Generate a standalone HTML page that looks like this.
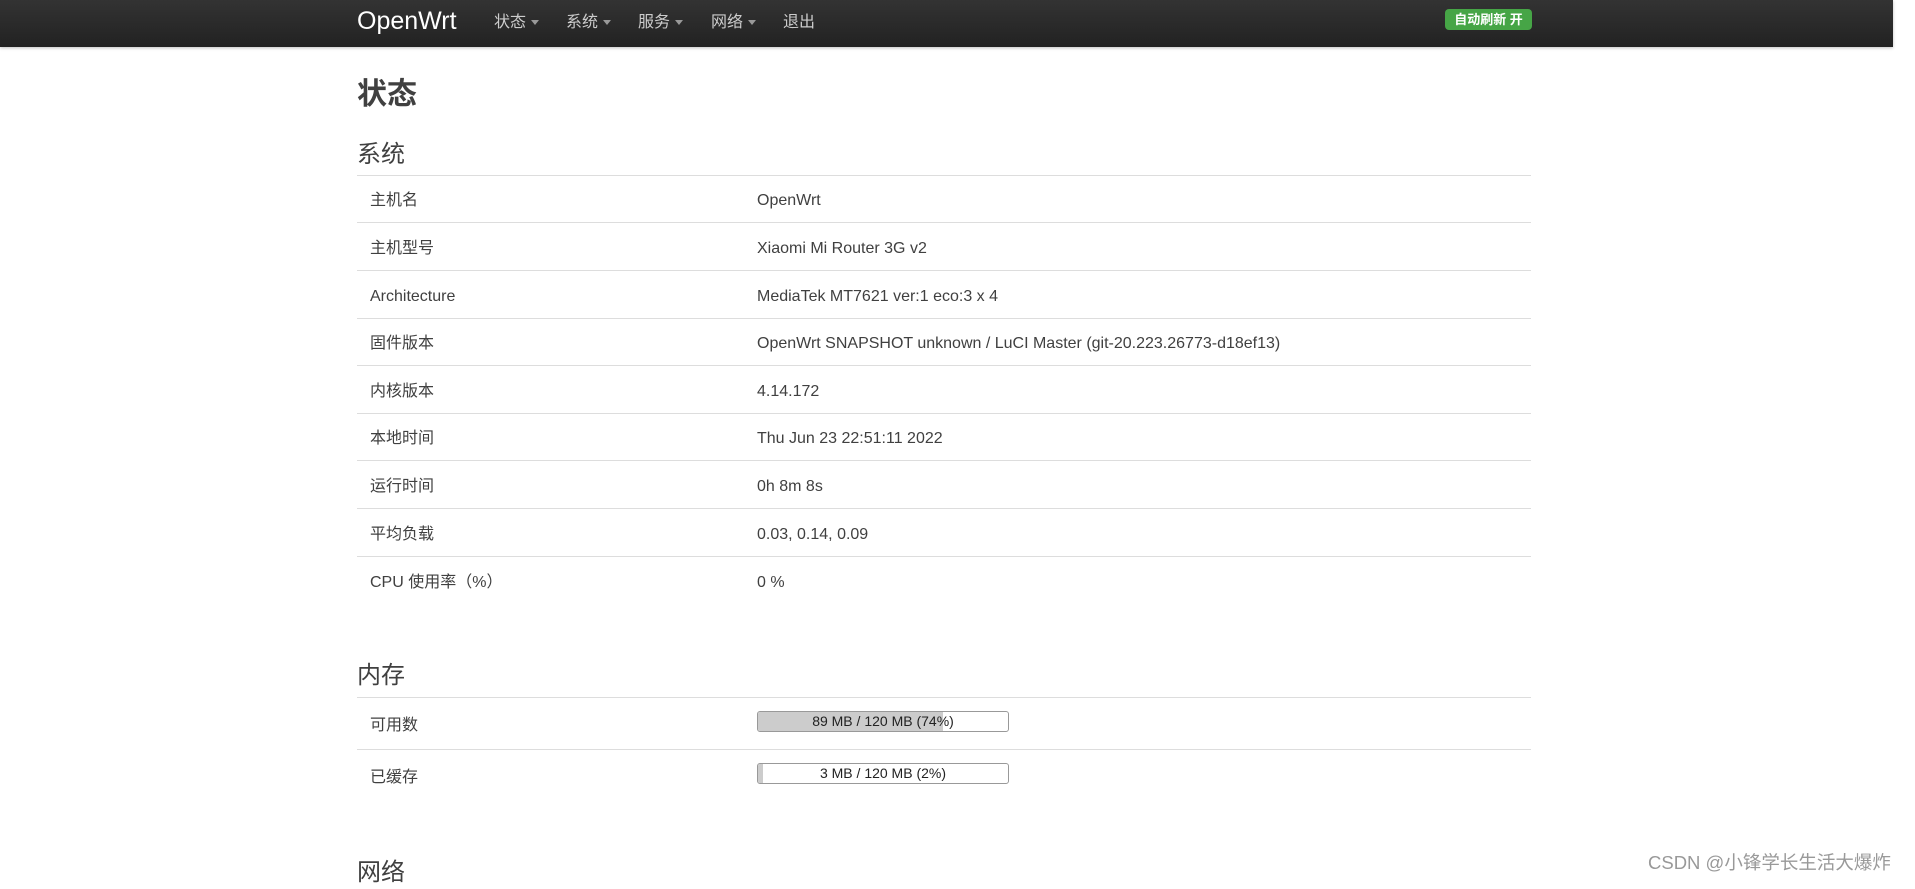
<!DOCTYPE html>
<html><head><meta charset="utf-8"><style>
*{box-sizing:border-box;margin:0;padding:0}
body{width:1915px;height:881px;overflow:hidden;background:#fff;font-family:"Liberation Sans","Noto Sans CJK SC",sans-serif;color:#404040;position:relative}
.nav{position:absolute;left:0;top:0;width:1893px;height:47px;background:linear-gradient(#333,#222);box-shadow:0 1px 3px rgba(0,0,0,.25)}
.brand{position:absolute;left:357px;top:6px;font-size:25px;line-height:30px;color:#fff}
.mi{position:absolute;top:12px;font-size:16px;line-height:22px;color:#ccc}
.caret{display:inline-block;width:0;height:0;border-left:4px solid transparent;border-right:4px solid transparent;border-top:5px solid #999;margin-left:5px;vertical-align:middle}
.badge{position:absolute;left:1445px;top:9px;width:87px;height:21px;background:#46a546;border-radius:4px;color:#fff;font-weight:bold;font-size:13px;line-height:21px;text-align:center}
h1{position:absolute;left:357px;top:75px;font-size:30px;line-height:40px;font-weight:bold;color:#404040}
h2{position:absolute;left:357px;font-size:24px;line-height:32px;font-weight:normal;color:#404040}
.row{position:absolute;left:357px;width:1174px;border-top:1px solid #ddd;font-size:16px}
.row span{position:absolute;top:50%;height:22px;line-height:22px;margin-top:-9px;overflow:visible}
.l{left:13px}.v{left:400px}
.bar{position:absolute;left:400px;width:252px;height:21px;border:1px solid #999;border-radius:3px;overflow:hidden;font-size:14px;text-align:center;line-height:19px;color:#222}
.bar i{position:absolute;left:0;top:0;bottom:0;background:#ccc}
.bar b{position:relative;font-weight:normal}
.wm{position:absolute;left:1648px;top:851px;font-size:18.5px;line-height:24px;color:#999}
</style></head><body>
<div class="nav">
<div class="brand">OpenWrt</div>
<div class="mi" style="left:494px">状态<span class="caret"></span></div>
<div class="mi" style="left:566px">系统<span class="caret"></span></div>
<div class="mi" style="left:638px">服务<span class="caret"></span></div>
<div class="mi" style="left:711px">网络<span class="caret"></span></div>
<div class="mi" style="left:783px">退出</div>
<div class="badge">自动刷新 开</div>
</div>
<h1>状态</h1>
<h2 style="top:139px">系统</h2>
<div class="row" style="top:175px;height:47px"><span class="l">主机名</span><span class="v">OpenWrt</span></div>
<div class="row" style="top:222px;height:48px"><span class="l">主机型号</span><span class="v">Xiaomi Mi Router 3G v2</span></div>
<div class="row" style="top:270px;height:48px"><span class="l">Architecture</span><span class="v">MediaTek MT7621 ver:1 eco:3 x 4</span></div>
<div class="row" style="top:318px;height:47px"><span class="l">固件版本</span><span class="v">OpenWrt SNAPSHOT unknown / LuCI Master (git-20.223.26773-d18ef13)</span></div>
<div class="row" style="top:365px;height:48px"><span class="l">内核版本</span><span class="v">4.14.172</span></div>
<div class="row" style="top:413px;height:47px"><span class="l">本地时间</span><span class="v">Thu Jun 23 22:51:11 2022</span></div>
<div class="row" style="top:460px;height:48px"><span class="l">运行时间</span><span class="v">0h 8m 8s</span></div>
<div class="row" style="top:508px;height:48px"><span class="l">平均负载</span><span class="v">0.03, 0.14, 0.09</span></div>
<div class="row" style="top:556px;height:48px"><span class="l">CPU 使用率（%）</span><span class="v">0 %</span></div>
<h2 style="top:660px">内存</h2>
<div class="row" style="top:697px;height:52px"><span class="l">可用数</span><div class="bar" style="top:13px"><i style="width:74%"></i><b>89 MB / 120 MB (74%)</b></div></div>
<div class="row" style="top:749px;height:52px"><span class="l">已缓存</span><div class="bar" style="top:13px"><i style="width:2%"></i><b>3 MB / 120 MB (2%)</b></div></div>
<h2 style="top:857px">网络</h2>
<div class="wm">CSDN @小锋学长生活大爆炸</div>
</body></html>
